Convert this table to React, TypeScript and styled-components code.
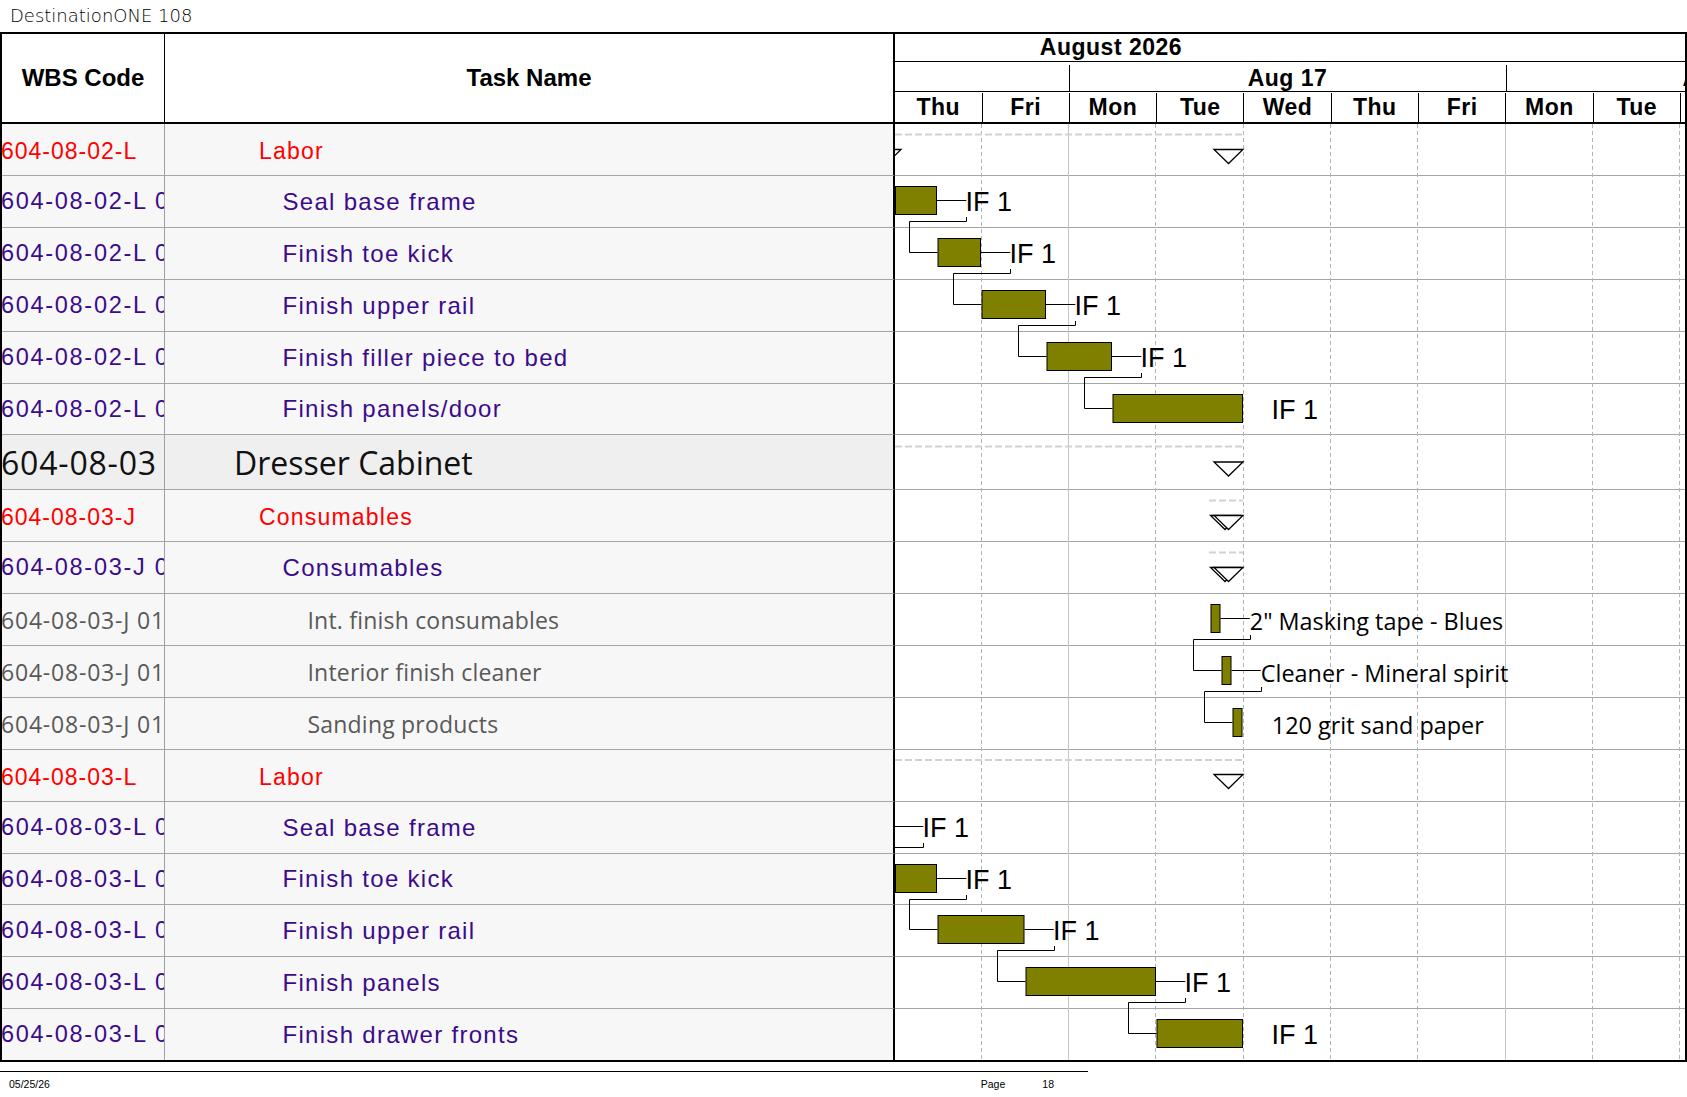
import styled, { createGlobalStyle } from "styled-components";

const GlobalStyle = createGlobalStyle`
  html, body {
    margin: 0;
    padding: 0;
    background: #fff;
  }
  body {
    font-family: "Liberation Sans", Arial, sans-serif;
    color: #000;
  }
`;

type Kind = "group" | "task" | "item" | "section";

interface IRow {
  wbs: string;
  name: string;
  kind: Kind;
}

interface IBar {
  row: number;
  x0: number;
  x1: number;
  label: string;
  lead: boolean;
  face: "arial" | "calibri";
}

interface ISummary {
  row: number;
  dash: [number, number];
  dashDy: number;
  triDy: number;
  double: boolean;
  startCap?: boolean;
}

const DAY = 87.3;
const LEAD = 29.3;
const GANTT_W = 790;
const ROW_H = [52, 52, 52, 52, 52, 51, 55, 52, 52, 52, 52, 52, 52, 52, 51, 52, 52, 51];
const TOPS = ROW_H.reduce<number[]>((acc, h, i) => [...acc, i === 0 ? 0 : acc[i - 1] + ROW_H[i - 1]], []);
const BODY_H = ROW_H.reduce((a, b) => a + b, 0);

const rows: IRow[] = [
  { wbs: "604-08-02-L", name: "Labor", kind: "group" },
  { wbs: "604-08-02-L 01", name: "Seal base frame", kind: "task" },
  { wbs: "604-08-02-L 02", name: "Finish toe kick", kind: "task" },
  { wbs: "604-08-02-L 03", name: "Finish upper rail", kind: "task" },
  { wbs: "604-08-02-L 04", name: "Finish filler piece to bed", kind: "task" },
  { wbs: "604-08-02-L 05", name: "Finish panels/door", kind: "task" },
  { wbs: "604-08-03", name: "Dresser Cabinet", kind: "section" },
  { wbs: "604-08-03-J", name: "Consumables", kind: "group" },
  { wbs: "604-08-03-J 01", name: "Consumables", kind: "task" },
  { wbs: "604-08-03-J 01.01", name: "Int. finish consumables", kind: "item" },
  { wbs: "604-08-03-J 01.02", name: "Interior finish cleaner", kind: "item" },
  { wbs: "604-08-03-J 01.03", name: "Sanding products", kind: "item" },
  { wbs: "604-08-03-L", name: "Labor", kind: "group" },
  { wbs: "604-08-03-L 01", name: "Seal base frame", kind: "task" },
  { wbs: "604-08-03-L 02", name: "Finish toe kick", kind: "task" },
  { wbs: "604-08-03-L 03", name: "Finish upper rail", kind: "task" },
  { wbs: "604-08-03-L 04", name: "Finish panels", kind: "task" },
  { wbs: "604-08-03-L 05", name: "Finish drawer fronts", kind: "task" },
];

const bars: IBar[] = [
  { row: 1, x0: 0, x1: 42, label: "IF 1", lead: true, face: "arial" },
  { row: 2, x0: 42.5, x1: 86, label: "IF 1", lead: true, face: "arial" },
  { row: 3, x0: 86.5, x1: 151, label: "IF 1", lead: true, face: "arial" },
  { row: 4, x0: 151.5, x1: 217, label: "IF 1", lead: true, face: "arial" },
  { row: 5, x0: 217.5, x1: 348, label: "IF 1", lead: false, face: "arial" },
  { row: 9, x0: 315.5, x1: 325.5, label: "2\" Masking tape - Blues", lead: true, face: "calibri" },
  { row: 10, x0: 326.5, x1: 336.5, label: "Cleaner - Mineral spirit", lead: true, face: "calibri" },
  { row: 11, x0: 337.5, x1: 347.5, label: "120 grit sand paper", lead: false, face: "calibri" },
  { row: 13, x0: -1, x1: -1, label: "IF 1", lead: true, face: "arial" },
  { row: 14, x0: 0, x1: 42, label: "IF 1", lead: true, face: "arial" },
  { row: 15, x0: 42.5, x1: 129.5, label: "IF 1", lead: true, face: "arial" },
  { row: 16, x0: 130.5, x1: 261, label: "IF 1", lead: true, face: "arial" },
  { row: 17, x0: 261.5, x1: 348, label: "IF 1", lead: false, face: "arial" },
];

const summaries: ISummary[] = [
  { row: 0, dash: [0, 348], dashDy: 10.5, triDy: 25.5, double: false, startCap: true },
  { row: 6, dash: [0, 348], dashDy: 11.5, triDy: 27, double: false },
  { row: 7, dash: [314, 348], dashDy: 10.5, triDy: 25.5, double: true },
  { row: 8, dash: [314, 348], dashDy: 10.5, triDy: 25.5, double: true },
  { row: 12, dash: [0, 348], dashDy: 10, triDy: 24.5, double: false },
];

const days = ["Thu", "Fri", "Mon", "Tue", "Wed", "Thu", "Fri", "Mon", "Tue", "Wed"];

const textColor: Record<Kind, string> = {
  group: "#ff0000",
  task: "#3b0b8c",
  item: "#595959",
  section: "#111111",
};

const indent: Record<Kind, number> = {
  section: 69,
  group: 94,
  task: 117.5,
  item: 142.5,
};

const Page = styled.div`
  width: 1687px;
  height: 1097px;
  overflow: hidden;
`;

const Title = styled.div`
  height: 32px;
  box-sizing: border-box;
  padding: 5px 0 0 10px;
  font-family: "DejaVu Sans", sans-serif;
  font-weight: 200;
  font-size: 18px;
  line-height: 21px;
  color: #000;
`;

const Sheet = styled.div`
  width: 1687px;
  box-sizing: border-box;
  border: 2px solid #000;
`;

const HeaderGrid = styled.div`
  display: grid;
  grid-template-columns: 163px 730px 790px;
  height: 90px;
  box-sizing: border-box;
  border-bottom: 2px solid #000;
`;

const HeadCell = styled.div<{ $thick?: boolean }>`
  display: flex;
  align-items: center;
  justify-content: center;
  box-sizing: border-box;
  border-right: ${(p) => (p.$thick ? "2px" : "1px")} solid #000;
  font-weight: 700;
  font-size: 24px;
`;

const Timescale = styled.div`
  display: flex;
  flex-direction: column;
  overflow: hidden;
`;

const ScaleRow = styled.div<{ $h: number; $line?: boolean; $drop?: number }>`
  display: flex;
  height: ${(p) => p.$h}px;
  box-sizing: border-box;
  padding-top: ${(p) => p.$drop ?? 0}px;
  border-bottom: ${(p) => (p.$line ? "1px solid #000" : "none")};
  font-weight: 700;
  font-size: 23px;
  white-space: nowrap;
`;

const ScaleCell = styled.div<{ $w: number; $first?: boolean; $pad?: number }>`
  flex: 0 0 ${(p) => p.$w}px;
  display: flex;
  align-items: center;
  justify-content: ${(p) => (p.$pad !== undefined ? "flex-start" : "center")};
  padding-left: ${(p) => p.$pad ?? 0}px;
  box-sizing: border-box;
  border-left: ${(p) => (p.$first ? "none" : "1px solid #000")};
  letter-spacing: 0.5px;
  overflow: hidden;
`;

const Body = styled.div`
  display: grid;
  grid-template-columns: 163px 730px 790px;
  grid-template-rows: ${ROW_H.map((h) => `${h}px`).join(" ")};
`;

const Cell = styled.div<{ $kind: Kind; $last: boolean }>`
  display: flex;
  align-items: center;
  box-sizing: border-box;
  overflow: hidden;
  white-space: pre;
  padding-top: ${(p) => (p.$kind === "group" ? 3 : 0)}px;
  background: ${(p) => (p.$kind === "section" ? "#efefef" : "#f7f7f7")};
  border-bottom: ${(p) => (p.$last ? "none" : "1px solid #a6a6a6")};
  color: ${(p) => textColor[p.$kind]};
  font-family: ${(p) =>
    p.$kind === "item" || p.$kind === "section"
      ? `"Open Sans", sans-serif`
      : `"Liberation Sans", Arial, sans-serif`};
`;

const WbsCell = styled(Cell)`
  border-right: 1px solid #a0a0a0;
  text-indent: -1px;
  font-size: ${(p) => ({ group: 23, task: 23.5, item: 23, section: 32 }[p.$kind])}px;
  letter-spacing: ${(p) => ({ group: 1, task: 1.7, item: 0.8, section: 0.8 }[p.$kind])}px;
`;

const NameCell = styled(Cell)`
  border-right: 2px solid #000;
  padding-left: ${(p) => indent[p.$kind]}px;
  font-size: ${(p) => ({ group: 23, task: 24, item: 23, section: 32 }[p.$kind])}px;
  letter-spacing: ${(p) => ({ group: 1.2, task: 1.3, item: 0.2, section: 0 }[p.$kind])}px;
`;

const GanttCell = styled.div`
  grid-column: 3;
  grid-row: 1 / -1;
  background: #fff;
  overflow: hidden;
`;

const BarLabel = styled.text<{ $face: "arial" | "calibri" }>`
  font-family: ${(p) => (p.$face === "arial" ? `"Liberation Sans", Arial, sans-serif` : `"Open Sans", sans-serif`)};
  font-size: ${(p) => (p.$face === "arial" ? 27 : 23.4)}px;
  fill: #000;
`;

const Footer = styled.div`
  width: 1088px;
  margin-top: 9px;
  border-top: 1.5px solid #000;
`;

const FooterRow = styled.div`
  width: 1054px;
  display: flex;
  box-sizing: border-box;
  padding-left: 9px;
  margin-top: 6px;
  font-size: 10.5px;
  line-height: 12px;
`;

const PageLabel = styled.span`
  margin-left: auto;
`;

const PageNum = styled.span`
  margin-left: 37px;
`;

const px = (v: number) => Math.round(v) + 0.5;

function Triangle({ x, y }: { x: number; y: number }) {
  return (
    <polygon
      points={`${x},${y} ${x + 29},${y} ${x + 14.5},${y + 14}`}
      fill="#fff"
      stroke="#000"
      strokeWidth={1.3}
    />
  );
}

function GanttChart() {
  const byRow = new Map(bars.map((b) => [b.row, b]));

  return (
    <svg width={GANTT_W} height={BODY_H} viewBox={`0 0 ${GANTT_W} ${BODY_H}`}>
      {TOPS.slice(1).map((y) => (
        <line key={y} x1={0} x2={GANTT_W} y1={y - 0.5} y2={y - 0.5} stroke="#a6a6a6" />
      ))}
      {Array.from({ length: 9 }, (_, i) => i + 1).map((n) => {
        const x = Math.floor(DAY * n - 1) + 0.5;
        const week = n === 2 || n === 7;
        return (
          <line
            key={n}
            x1={x}
            x2={x}
            y1={0}
            y2={BODY_H}
            stroke={week ? "#c4c4c4" : "#b4b4b4"}
            strokeDasharray={week ? undefined : "4 3"}
          />
        );
      })}

      {summaries.map((s) => {
        const t = TOPS[s.row];
        return (
          <g key={s.row}>
            <line
              x1={s.dash[0]}
              x2={s.dash[1]}
              y1={t + s.dashDy}
              y2={t + s.dashDy}
              stroke="#d2d2d2"
              strokeWidth={2}
              strokeDasharray="7 3"
            />
            {s.startCap && <Triangle x={-23} y={t + s.triDy} />}
            {s.double && <Triangle x={315.5} y={t + s.triDy} />}
            <Triangle x={319} y={t + s.triDy} />
          </g>
        );
      })}

      {bars.map((b) => {
        const next = byRow.get(b.row + 1);
        if (!next) return null;
        const t = TOPS[b.row];
        const nt = TOPS[next.row];
        const L = px(b.x1 + LEAD);
        const elbow = px(next.x0 - 29);
        return (
          <polyline
            key={`l${b.row}`}
            points={`${L},${t + 41} ${L},${t + 45.5} ${elbow},${t + 45.5} ${elbow},${nt + 24.5} ${next.x0},${nt + 24.5}`}
            fill="none"
            stroke="#000"
          />
        );
      })}

      {bars.map((b) => {
        const t = TOPS[b.row];
        const mid = t + 24.5;
        return (
          <g key={b.row}>
            {b.lead && <line x1={Math.max(b.x1, 0)} x2={b.x1 + LEAD} y1={mid} y2={mid} stroke="#000" />}
            {b.x1 > b.x0 && (
              <rect
                x={b.x0 + 0.5}
                y={t + 10.5}
                width={b.x1 - b.x0 - 1}
                height={28}
                fill="#808000"
                stroke="#000"
              />
            )}
            <BarLabel
              $face={b.face}
              x={b.face === "arial" ? b.x1 + 28.5 : b.x1 + 29.3}
              y={b.face === "arial" ? mid + 10 : mid + 11}
            >
              {b.label}
            </BarLabel>
          </g>
        );
      })}
    </svg>
  );
}

export default function App() {
  return (
    <Page>
      <GlobalStyle />
      <Title>DestinationONE 108</Title>
      <Sheet>
        <HeaderGrid>
          <HeadCell>WBS Code</HeadCell>
          <HeadCell $thick>Task Name</HeadCell>
          <Timescale>
            <ScaleRow $h={28} $line>
              <ScaleCell $w={432} $first>
                August 2026
              </ScaleCell>
            </ScaleRow>
            <ScaleRow $h={30} $line $drop={3}>
              <ScaleCell $w={173.5} $first />
              <ScaleCell $w={437}>Aug 17</ScaleCell>
              <ScaleCell $w={300} $pad={176}>
                Aug 24
              </ScaleCell>
            </ScaleRow>
            <ScaleRow $h={30} $drop={1}>
              {days.map((d, i) => (
                <ScaleCell key={i} $w={i === 0 ? 86.5 : DAY} $first={i === 0}>
                  {i < 9 ? d : ""}
                </ScaleCell>
              ))}
            </ScaleRow>
          </Timescale>
        </HeaderGrid>

        <Body>
          {rows.map((r, i) => {
            const last = i === rows.length - 1;
            return [
              <WbsCell key={`w${i}`} $kind={r.kind} $last={last} style={{ gridRow: i + 1 }}>
                {r.wbs}
              </WbsCell>,
              <NameCell key={`n${i}`} $kind={r.kind} $last={last} style={{ gridRow: i + 1 }}>
                {r.name}
              </NameCell>,
            ];
          })}
          <GanttCell>
            <GanttChart />
          </GanttCell>
        </Body>
      </Sheet>
      <Footer />
      <FooterRow>
        <span>05/25/26</span>
        <PageLabel>Page</PageLabel>
        <PageNum>18</PageNum>
      </FooterRow>
    </Page>
  );
}
